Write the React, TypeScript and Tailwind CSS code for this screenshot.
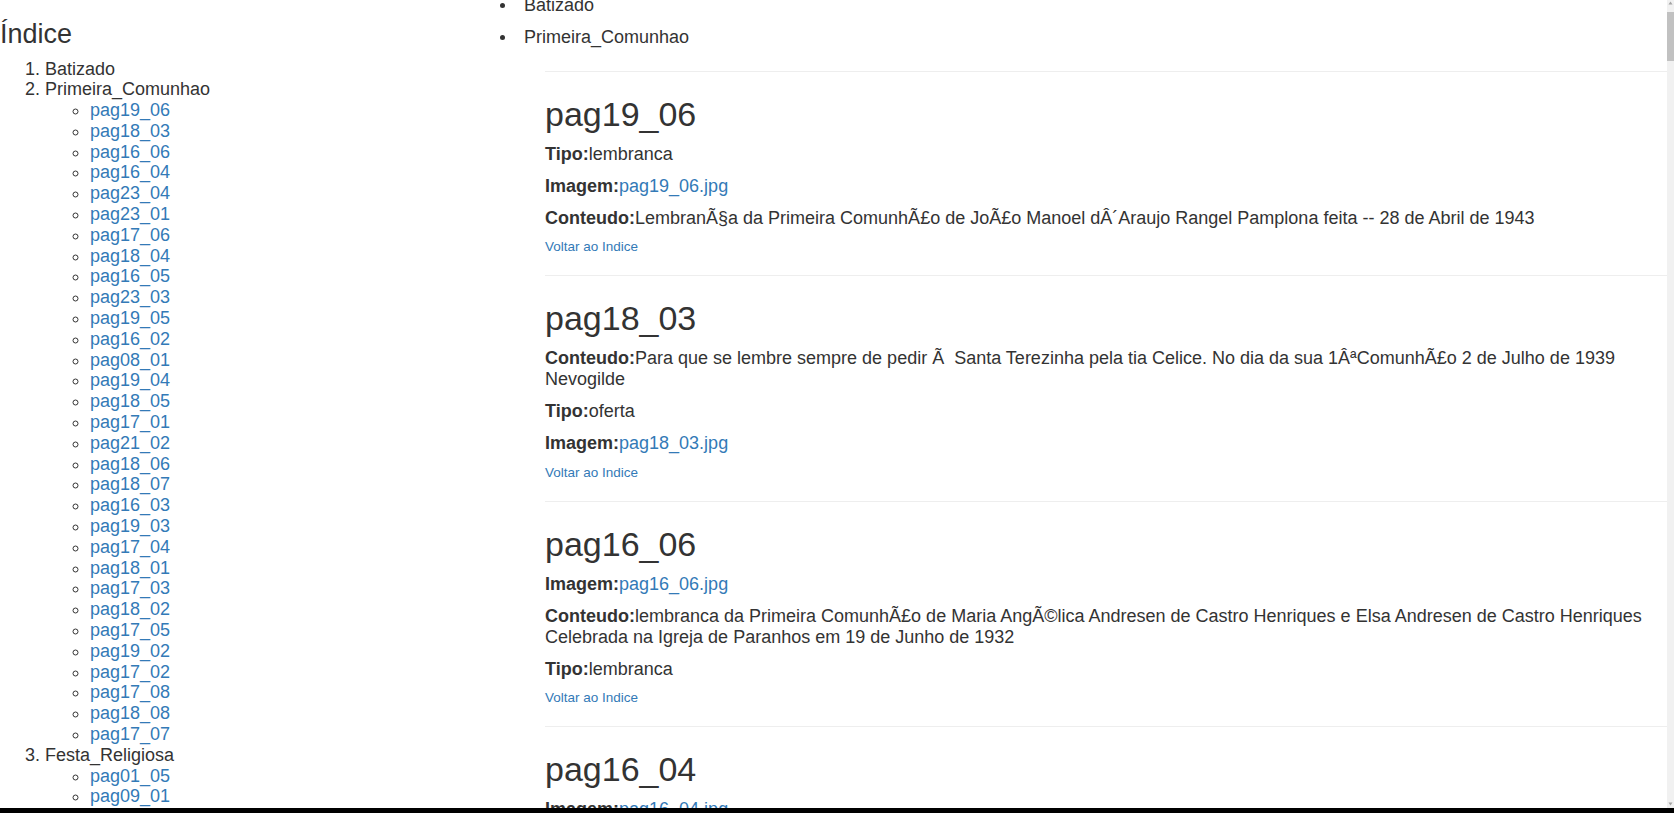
const paginas = [
  "pag19_06", "pag18_03", "pag16_06", "pag16_04", "pag23_04", "pag23_01", "pag17_06", "pag18_04",
  "pag16_05", "pag23_03", "pag19_05", "pag16_02", "pag08_01", "pag19_04", "pag18_05", "pag17_01",
  "pag21_02", "pag18_06", "pag18_07", "pag16_03", "pag19_03", "pag17_04", "pag18_01", "pag17_03",
  "pag18_02", "pag17_05", "pag19_02", "pag17_02", "pag17_08", "pag18_08", "pag17_07",
];

const festa = ["pag01_05", "pag09_01", "pag21_01", "pag21_03", "pag09_02"];

type Campo = { rotulo: string; valor: string; link?: boolean };
interface Entrada {
  id: string;
  campos: Campo[];
}

const entradas: Entrada[] = [
  {
    id: "pag19_06",
    campos: [
      { rotulo: "Tipo:", valor: "lembranca" },
      { rotulo: "Imagem:", valor: "pag19_06.jpg", link: true },
      {
        rotulo: "Conteudo:",
        valor: "LembranÃ§a da Primeira ComunhÃ£o de JoÃ£o Manoel dÂ´Araujo Rangel Pamplona feita -- 28 de Abril de 1943",
      },
    ],
  },
  {
    id: "pag18_03",
    campos: [
      {
        rotulo: "Conteudo:",
        valor: "Para que se lembre sempre de pedir Ã\u00a0 Santa Terezinha pela tia Celice. No dia da sua 1ÂªComunhÃ£o 2 de Julho de 1939 Nevogilde",
      },
      { rotulo: "Tipo:", valor: "oferta" },
      { rotulo: "Imagem:", valor: "pag18_03.jpg", link: true },
    ],
  },
  {
    id: "pag16_06",
    campos: [
      { rotulo: "Imagem:", valor: "pag16_06.jpg", link: true },
      {
        rotulo: "Conteudo:",
        valor: "lembranca da Primeira ComunhÃ£o de Maria AngÃ©lica Andresen de Castro Henriques e Elsa Andresen de Castro Henriques Celebrada na Igreja de Paranhos em 19 de Junho de 1932",
      },
      { rotulo: "Tipo:", valor: "lembranca" },
    ],
  },
  {
    id: "pag16_04",
    campos: [
      { rotulo: "Imagem:", valor: "pag16_04.jpg", link: true },
      { rotulo: "Tipo:", valor: "lembranca" },
      { rotulo: "Conteudo:", valor: "Lembranca da Primeira ComunhÃ£o" },
    ],
  },
];

const Indice = () => (
  <aside className="w-[485px] shrink-0 overflow-hidden">
    <div className="pt-[19.5px] text-[27px] leading-[28px]">Índice</div>
    <ol className="mt-[11px] list-decimal pl-[45px] text-[18px] leading-[20.8px]">
      <li>Batizado</li>
      <li>
        Primeira_Comunhao
        <ul className="list-[circle] pl-[45px]">
          {paginas.map((p) => (
            <li key={p}>
              <a href={"#" + p} className="text-[#337ab7]">
                {p}
              </a>
            </li>
          ))}
        </ul>
      </li>
      <li>
        Festa_Religiosa
        <ul className="list-[circle] pl-[45px]">
          {festa.map((p) => (
            <li key={p}>
              <a href={"#" + p} className="text-[#337ab7]">
                {p}
              </a>
            </li>
          ))}
        </ul>
      </li>
    </ol>
  </aside>
);

const Cartao = ({ id, campos }: Entrada) => (
  <section id={id} className="border-t border-[#eeeeee] pt-[22px] pb-[20px]">
    <h1 className="text-[34px] leading-[40px] font-normal">{id}</h1>
    <div className="mt-[10px] flex flex-col gap-[11px] text-[18px] leading-[21px]">
      {campos.map((c) => (
        <p key={c.rotulo}>
          <b className="font-bold">{c.rotulo}</b>
          {c.link ? <a className="text-[#337ab7]">{c.valor}</a> : c.valor}
        </p>
      ))}
    </div>
    <a className="mt-[10.5px] block text-[13.5px] leading-[16px] text-[#337ab7]">Voltar ao Indice</a>
  </section>
);

const BarraRolagem = () => (
  <div className="flex w-[7px] shrink-0 flex-col items-center bg-[#f1f1f1]">
    <svg width="5" height="12" viewBox="0 0 5 12" className="shrink-0">
      <path d="M2.5 1.5 L4.5 4.5 L0.5 4.5 Z" fill="#a3a3a3" />
    </svg>
    <div className="h-[49px] w-full bg-[#c1c1c1]" />
    <div className="flex-1" />
    <svg width="5" height="12" viewBox="0 0 5 12" className="shrink-0">
      <path d="M0.5 6.5 L4.5 6.5 L2.5 9.5 Z" fill="#a3a3a3" />
    </svg>
  </div>
);

export default function App() {
  return (
    <div className="flex h-[813px] flex-col overflow-hidden bg-white font-['Liberation_Sans',Arial,sans-serif] text-[#333333]">
      <div className="flex min-h-0 flex-1">
        <Indice />
        <main className="min-w-0 flex-1 overflow-hidden">
          <div className="mt-[-5px]">
            <ul className="mb-[23.5px] flex flex-col gap-[11px] text-[18px] leading-[20.7px]">
              {["Batizado", "Primeira_Comunhao"].map((t) => (
                <li key={t} className="flex items-center">
                  <span className="ml-[15px] h-[5px] w-[5px] shrink-0 rounded-full bg-[#333333]" />
                  <span className="ml-[19px]">{t}</span>
                </li>
              ))}
            </ul>
            <div className="ml-[60px]">
              {entradas.map((e) => (
                <Cartao key={e.id} {...e} />
              ))}
            </div>
          </div>
        </main>
        <BarraRolagem />
      </div>
      <div className="h-[5px] shrink-0 bg-black" />
    </div>
  );
}
